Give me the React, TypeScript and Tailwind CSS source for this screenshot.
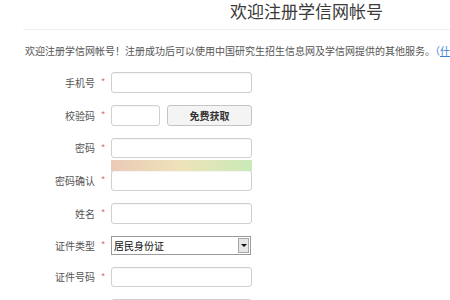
import React from "react";

const font = { fontFamily: '"Noto Sans CJK SC", "Noto Sans", sans-serif' };

function Label({ text }: { text: string }) {
  return (
    <>
      <div className="w-[95px] text-right text-[10px] leading-none text-[#555]">{text}</div>
      <div className="w-[16px] text-center text-[10px] leading-none text-[#e07878] -mt-[1px]">*</div>
    </>
  );
}

function Input({ w = 141, h = 21 }: { w?: number; h?: number }) {
  return (
    <div
      className="border border-[#cfcfcf] rounded-[3px] bg-white shadow-[inset_0_1px_1px_rgba(0,0,0,0.04)]"
      style={{ width: w, height: h }}
    />
  );
}

export default function App() {
  return (
    <div className="w-[450px] h-[300px] overflow-hidden bg-white" style={font}>
      <div className="pl-[230px] text-[17px] leading-[22px] text-[#3a3a3a] whitespace-nowrap">
        欢迎注册学信网帐号
      </div>
      <div className="ml-[23px] mt-[7px] border-t border-[#efefef]" />
      <div className="pl-[25px] mt-[14px] text-[10px] leading-[14px] text-[#555] whitespace-nowrap">
        欢迎注册学信网帐号！注册成功后可以使用中国研究生招生信息网及学信网提供的其他服务。
        <span className="text-[#3b82d6]">
          （<span className="underline">什么是学信网帐号？</span>）
        </span>
      </div>

      <div className="mt-[14px] flex flex-col gap-[12px]">
        <div className="flex items-center h-[21px]">
          <Label text="手机号" />
          <Input />
        </div>
        <div className="flex items-center h-[21px]">
          <Label text="校验码" />
          <Input w={49} />
          <div className="ml-[7px] w-[85px] h-[21px] border border-[#c4c4c4] rounded-[3px] bg-[#f4f4f4] flex items-center justify-center text-[10px] font-bold text-[#333]">
            免费获取
          </div>
        </div>
        <div className="flex items-center h-[20px] relative">
          <Label text="密码" />
          <Input h={20} />
          <div className="absolute left-[111px] top-[22px] w-[141px] h-[11px] bg-gradient-to-r from-[#ebcab8] via-[#eee3b8] to-[#c8eab7] z-10" />
        </div>
        <div className="flex items-center h-[21px]">
          <Label text="密码确认" />
          <Input />
        </div>
        <div className="flex items-center h-[21px]">
          <Label text="姓名" />
          <Input />
        </div>
        <div className="flex items-center h-[19px]">
          <Label text="证件类型" />
          <div className="w-[140px] h-[19px] border border-[#9a9a9a] bg-white flex items-center justify-between pl-[2px] pr-[1px]">
            <span className="text-[10px] leading-none text-[#111]">居民身份证</span>
            <div className="w-[11px] h-[15px] border border-[#a8a8a8] bg-[#e6e6e6] flex items-center justify-center">
              <div className="w-0 h-0 border-l-[3px] border-r-[3px] border-t-[3px] border-l-transparent border-r-transparent border-t-[#111]" />
            </div>
          </div>
        </div>
        <div className="flex items-center h-[20px]">
          <Label text="证件号码" />
          <Input h={20} />
        </div>
        <div className="flex items-center h-[21px]">
          <div className="w-[111px]" />
          <Input />
        </div>
      </div>
    </div>
  );
}
